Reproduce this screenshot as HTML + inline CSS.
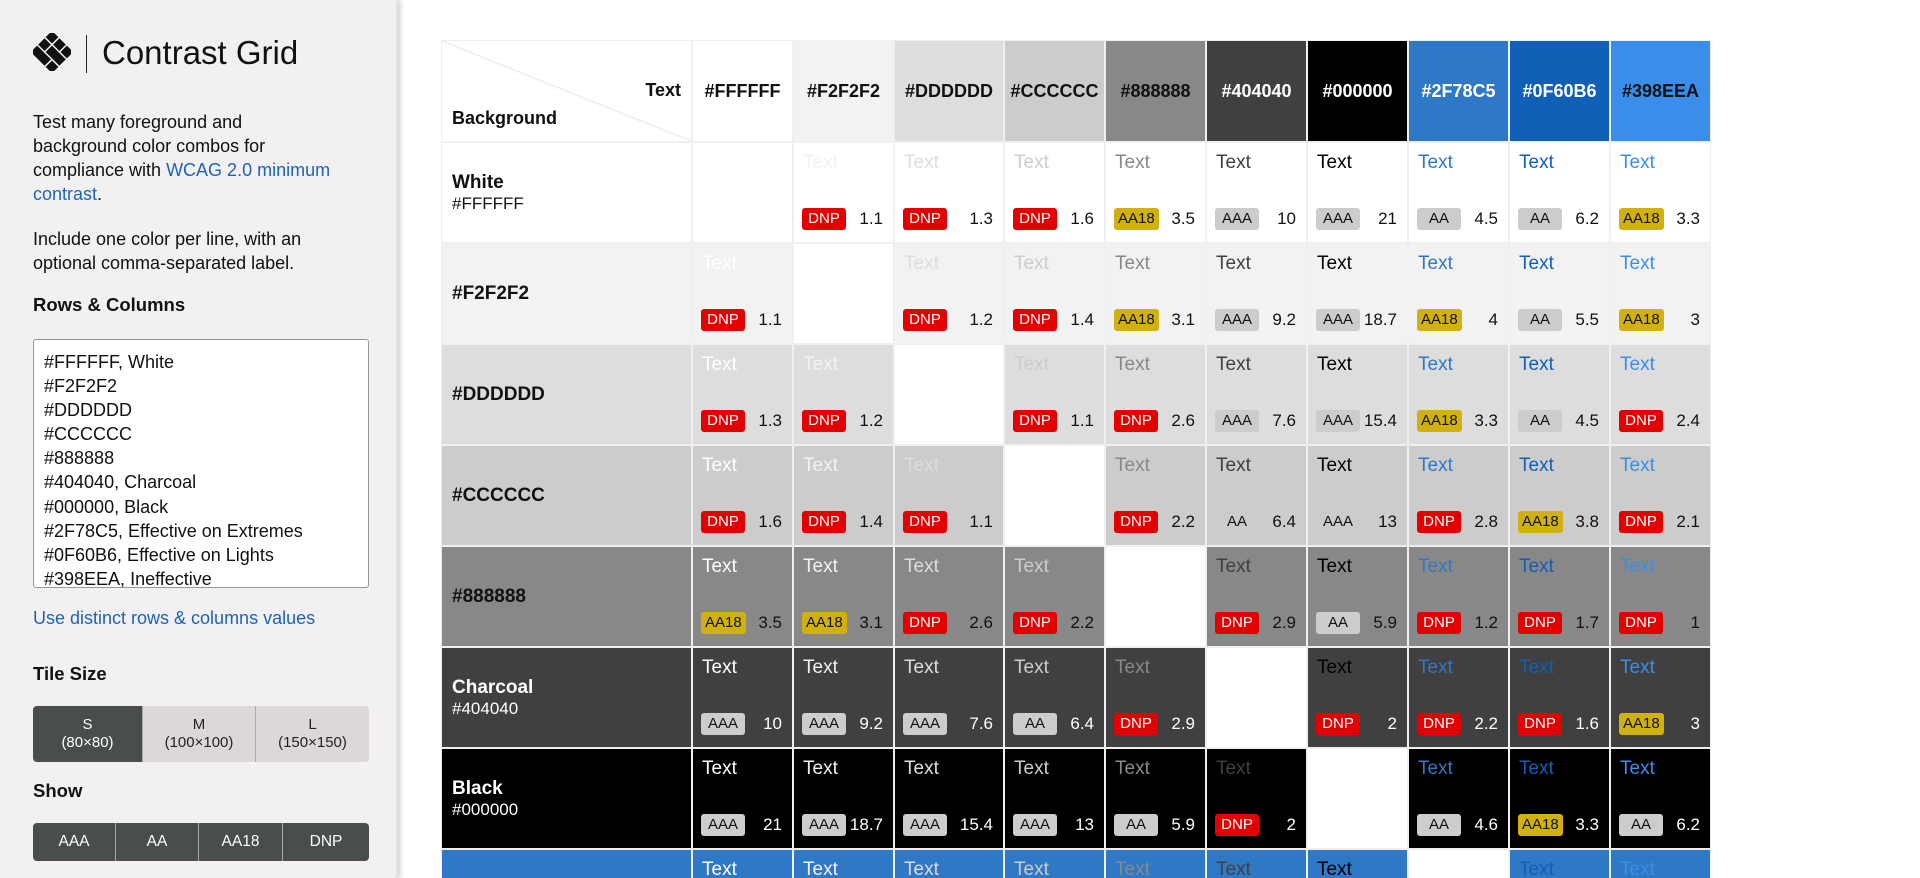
<!DOCTYPE html>
<html><head><meta charset="utf-8"><style>
*{box-sizing:border-box;margin:0;padding:0}
html,body{width:1920px;height:878px;overflow:hidden;background:#fff;font-family:"Liberation Sans",sans-serif;color:#111}
#wrap{position:relative;width:1920px;height:878px;overflow:hidden}
#side{position:absolute;left:0;top:0;width:396px;height:878px;background:#f2f0f0;box-shadow:2px 0 0 #e2e2e2,5px 0 4px #d8d8d8;z-index:2}
.a{position:absolute;white-space:nowrap}
.p{font-size:18px;line-height:24px;left:33px}
.h{font-size:18.5px;font-weight:bold;left:33px}
a{color:#1b64b8;text-decoration:none}
#ta{position:absolute;left:33px;top:339px;width:336px;height:249px;border:1px solid #999;border-radius:3px;background:#fff;overflow:hidden;padding:10px 0 0 10px;font-size:18px;line-height:24.1px}
.seg{position:absolute;left:33px;width:336px;display:flex;border-radius:4px;overflow:hidden}
.seg div{display:flex;flex-direction:column;justify-content:center;align-items:center;text-align:center;font-size:15px;line-height:18px;border-right:1px solid #aaa}
.seg div:last-child{border-right:0}
.dk{background:#4a4d4d;color:#fff}
.lt{background:#dcd8d8;color:#222}
table{position:absolute;left:441px;top:40px;border-collapse:separate;border-spacing:0;table-layout:fixed}
td{border:1px solid #f0f0f0;height:101px;width:101px;position:relative;padding:0;vertical-align:middle}
td.w{width:110px}
td.rh{width:251px;padding-left:10px;font-size:19px;font-weight:bold}
td.rh em{display:block;font-style:normal;font-weight:normal;font-size:17px}
thead td{height:102px;text-align:center;font-weight:bold;font-size:18px;font-family:"Liberation Sans Narrow","Liberation Sans",sans-serif}
.t{position:absolute;left:9px;top:8px;font-size:19px;line-height:24px}
.b{position:absolute;left:8px;bottom:12px;height:22px;line-height:22px;min-width:44px;padding:0 4px;text-align:center;border-radius:3px;font-size:15px;color:#111}
.b.d{background:#e30000;color:#fff}
.b.y{background:#d1b10f}
.b.g{background:#ccc}
.r{position:absolute;right:10px;bottom:12px;line-height:22px;font-size:17px}
.dg{background:#fff!important}
.f0{color:#fff}.f1{color:#f2f2f2}.f2{color:#ddd}.f3{color:#ccc}.f4{color:#888}.f5{color:#404040}.f6{color:#000}.f7{color:#2f78c5}.f8{color:#0f60b6}.f9{color:#398eea}
.r0 td{background:#fff}.r1 td{background:#f2f2f2}.r2 td{background:#ddd}.r3 td{background:#ccc}.r4 td{background:#888}
.r5 td{background:#404040;color:#fff}.r6 td{background:#000;color:#fff}.r7 td{background:#2f78c5;color:#fff}
</style></head><body><div id="wrap">
<div id="side">
<svg class="a" style="left:33px;top:33px" width="38" height="38" viewBox="0 0 38 38"><g fill="#111" transform="rotate(45 19 19)"><rect x="4" y="4" width="9" height="9"/><rect x="14.5" y="4" width="9" height="9"/><rect x="25" y="4" width="9" height="9"/><rect x="4" y="14.5" width="9" height="9"/><rect x="14.5" y="14.5" width="19.5" height="9"/><rect x="4" y="25" width="19.5" height="9"/><rect x="25" y="25" width="9" height="9"/></g></svg>
<div class="a" style="left:86px;top:35px;width:1px;height:38px;background:#222"></div>
<div class="a" style="left:102px;top:32px;font-size:33px;line-height:42px;color:#111">Contrast Grid</div>
<div class="a p" style="top:110px">Test many foreground and<br>background color combos for<br>compliance with <a>WCAG 2.0 minimum</a><br><a>contrast</a>.</div>
<div class="a p" style="top:227px">Include one color per line, with an<br>optional comma-separated label.</div>
<div class="a h" style="top:294px">Rows &amp; Columns</div>
<div id="ta">#FFFFFF, White<br>#F2F2F2<br>#DDDDDD<br>#CCCCCC<br>#888888<br>#404040, Charcoal<br>#000000, Black<br>#2F78C5, Effective on Extremes<br>#0F60B6, Effective on Lights<br>#398EEA, Ineffective</div>
<div class="a p" style="top:606px"><a>Use distinct rows &amp; columns values</a></div>
<div class="a h" style="top:663px">Tile Size</div>
<div class="seg" style="top:706px;height:56px"><div class="dk" style="width:110px">S<br>(80×80)</div><div class="lt" style="width:113px">M<br>(100×100)</div><div class="lt" style="width:113px">L<br>(150×150)</div></div>
<div class="a h" style="top:780px">Show</div>
<div class="seg" style="top:823px;height:38px"><div class="dk" style="width:83px;font-size:15.5px">AAA</div><div class="dk" style="width:83px;font-size:15.5px">AA</div><div class="dk" style="width:84px;font-size:15.5px">AA18</div><div class="dk" style="width:86px;font-size:15.5px">DNP</div></div>
</div>
<table>
<thead><tr>
<td class="rh" style="background:#fff;padding:0;position:relative"><svg style="position:absolute;left:0;top:0" width="249" height="100"><line x1="0" y1="0" x2="249" y2="100" stroke="#eee" stroke-width="1.5"/></svg><span style="position:absolute;right:10px;top:39px;font-size:18px">Text</span><span style="position:absolute;left:10px;top:67px;font-size:18px">Background</span></td>
<td style="background:#fff">#FFFFFF</td><td style="background:#f2f2f2">#F2F2F2</td><td class="w" style="background:#ddd">#DDDDDD</td><td style="background:#ccc">#CCCCCC</td><td style="background:#888">#888888</td><td style="background:#404040;color:#fff">#404040</td><td style="background:#000;color:#fff">#000000</td><td style="background:#2f78c5;color:#fff">#2F78C5</td><td style="background:#0f60b6;color:#fff">#0F60B6</td><td style="background:#398eea">#398EEA</td>
</tr></thead>
<tbody>
<tr class="r0"><td class="rh">White<em>#FFFFFF</em></td>
<td class="dg"></td>
<td><span class="t f1">Text</span><span class="b d">DNP</span><span class="r">1.1</span></td>
<td class="w"><span class="t f2">Text</span><span class="b d">DNP</span><span class="r">1.3</span></td>
<td><span class="t f3">Text</span><span class="b d">DNP</span><span class="r">1.6</span></td>
<td><span class="t f4">Text</span><span class="b y">AA18</span><span class="r">3.5</span></td>
<td><span class="t f5">Text</span><span class="b g">AAA</span><span class="r">10</span></td>
<td><span class="t f6">Text</span><span class="b g">AAA</span><span class="r">21</span></td>
<td><span class="t f7">Text</span><span class="b g">AA</span><span class="r">4.5</span></td>
<td><span class="t f8">Text</span><span class="b g">AA</span><span class="r">6.2</span></td>
<td><span class="t f9">Text</span><span class="b y">AA18</span><span class="r">3.3</span></td></tr>
<tr class="r1"><td class="rh">#F2F2F2</td>
<td><span class="t f0">Text</span><span class="b d">DNP</span><span class="r">1.1</span></td>
<td class="dg"></td>
<td class="w"><span class="t f2">Text</span><span class="b d">DNP</span><span class="r">1.2</span></td>
<td><span class="t f3">Text</span><span class="b d">DNP</span><span class="r">1.4</span></td>
<td><span class="t f4">Text</span><span class="b y">AA18</span><span class="r">3.1</span></td>
<td><span class="t f5">Text</span><span class="b g">AAA</span><span class="r">9.2</span></td>
<td><span class="t f6">Text</span><span class="b g">AAA</span><span class="r">18.7</span></td>
<td><span class="t f7">Text</span><span class="b y">AA18</span><span class="r">4</span></td>
<td><span class="t f8">Text</span><span class="b g">AA</span><span class="r">5.5</span></td>
<td><span class="t f9">Text</span><span class="b y">AA18</span><span class="r">3</span></td></tr>
<tr class="r2"><td class="rh">#DDDDDD</td>
<td><span class="t f0">Text</span><span class="b d">DNP</span><span class="r">1.3</span></td>
<td><span class="t f1">Text</span><span class="b d">DNP</span><span class="r">1.2</span></td>
<td class="w dg"></td>
<td><span class="t f3">Text</span><span class="b d">DNP</span><span class="r">1.1</span></td>
<td><span class="t f4">Text</span><span class="b d">DNP</span><span class="r">2.6</span></td>
<td><span class="t f5">Text</span><span class="b g">AAA</span><span class="r">7.6</span></td>
<td><span class="t f6">Text</span><span class="b g">AAA</span><span class="r">15.4</span></td>
<td><span class="t f7">Text</span><span class="b y">AA18</span><span class="r">3.3</span></td>
<td><span class="t f8">Text</span><span class="b g">AA</span><span class="r">4.5</span></td>
<td><span class="t f9">Text</span><span class="b d">DNP</span><span class="r">2.4</span></td></tr>
<tr class="r3"><td class="rh">#CCCCCC</td>
<td><span class="t f0">Text</span><span class="b d">DNP</span><span class="r">1.6</span></td>
<td><span class="t f1">Text</span><span class="b d">DNP</span><span class="r">1.4</span></td>
<td class="w"><span class="t f2">Text</span><span class="b d">DNP</span><span class="r">1.1</span></td>
<td class="dg"></td>
<td><span class="t f4">Text</span><span class="b d">DNP</span><span class="r">2.2</span></td>
<td><span class="t f5">Text</span><span class="b g">AA</span><span class="r">6.4</span></td>
<td><span class="t f6">Text</span><span class="b g">AAA</span><span class="r">13</span></td>
<td><span class="t f7">Text</span><span class="b d">DNP</span><span class="r">2.8</span></td>
<td><span class="t f8">Text</span><span class="b y">AA18</span><span class="r">3.8</span></td>
<td><span class="t f9">Text</span><span class="b d">DNP</span><span class="r">2.1</span></td></tr>
<tr class="r4"><td class="rh">#888888</td>
<td><span class="t f0">Text</span><span class="b y">AA18</span><span class="r">3.5</span></td>
<td><span class="t f1">Text</span><span class="b y">AA18</span><span class="r">3.1</span></td>
<td class="w"><span class="t f2">Text</span><span class="b d">DNP</span><span class="r">2.6</span></td>
<td><span class="t f3">Text</span><span class="b d">DNP</span><span class="r">2.2</span></td>
<td class="dg"></td>
<td><span class="t f5">Text</span><span class="b d">DNP</span><span class="r">2.9</span></td>
<td><span class="t f6">Text</span><span class="b g">AA</span><span class="r">5.9</span></td>
<td><span class="t f7">Text</span><span class="b d">DNP</span><span class="r">1.2</span></td>
<td><span class="t f8">Text</span><span class="b d">DNP</span><span class="r">1.7</span></td>
<td><span class="t f9">Text</span><span class="b d">DNP</span><span class="r">1</span></td></tr>
<tr class="r5"><td class="rh">Charcoal<em>#404040</em></td>
<td><span class="t f0">Text</span><span class="b g">AAA</span><span class="r">10</span></td>
<td><span class="t f1">Text</span><span class="b g">AAA</span><span class="r">9.2</span></td>
<td class="w"><span class="t f2">Text</span><span class="b g">AAA</span><span class="r">7.6</span></td>
<td><span class="t f3">Text</span><span class="b g">AA</span><span class="r">6.4</span></td>
<td><span class="t f4">Text</span><span class="b d">DNP</span><span class="r">2.9</span></td>
<td class="dg"></td>
<td><span class="t f6">Text</span><span class="b d">DNP</span><span class="r">2</span></td>
<td><span class="t f7">Text</span><span class="b d">DNP</span><span class="r">2.2</span></td>
<td><span class="t f8">Text</span><span class="b d">DNP</span><span class="r">1.6</span></td>
<td><span class="t f9">Text</span><span class="b y">AA18</span><span class="r">3</span></td></tr>
<tr class="r6"><td class="rh">Black<em>#000000</em></td>
<td><span class="t f0">Text</span><span class="b g">AAA</span><span class="r">21</span></td>
<td><span class="t f1">Text</span><span class="b g">AAA</span><span class="r">18.7</span></td>
<td class="w"><span class="t f2">Text</span><span class="b g">AAA</span><span class="r">15.4</span></td>
<td><span class="t f3">Text</span><span class="b g">AAA</span><span class="r">13</span></td>
<td><span class="t f4">Text</span><span class="b g">AA</span><span class="r">5.9</span></td>
<td><span class="t f5">Text</span><span class="b d">DNP</span><span class="r">2</span></td>
<td class="dg"></td>
<td><span class="t f7">Text</span><span class="b g">AA</span><span class="r">4.6</span></td>
<td><span class="t f8">Text</span><span class="b y">AA18</span><span class="r">3.3</span></td>
<td><span class="t f9">Text</span><span class="b g">AA</span><span class="r">6.2</span></td></tr>
<tr class="r7"><td class="rh">Effective on Extremes<em>#2F78C5</em></td>
<td><span class="t f0">Text</span></td>
<td><span class="t f1">Text</span></td>
<td class="w"><span class="t f2">Text</span></td>
<td><span class="t f3">Text</span></td>
<td><span class="t f4">Text</span></td>
<td><span class="t f5">Text</span></td>
<td><span class="t f6">Text</span></td>
<td class="dg"></td>
<td><span class="t f8">Text</span></td>
<td><span class="t f9">Text</span></td></tr>
</tbody></table>
</div></body></html>
